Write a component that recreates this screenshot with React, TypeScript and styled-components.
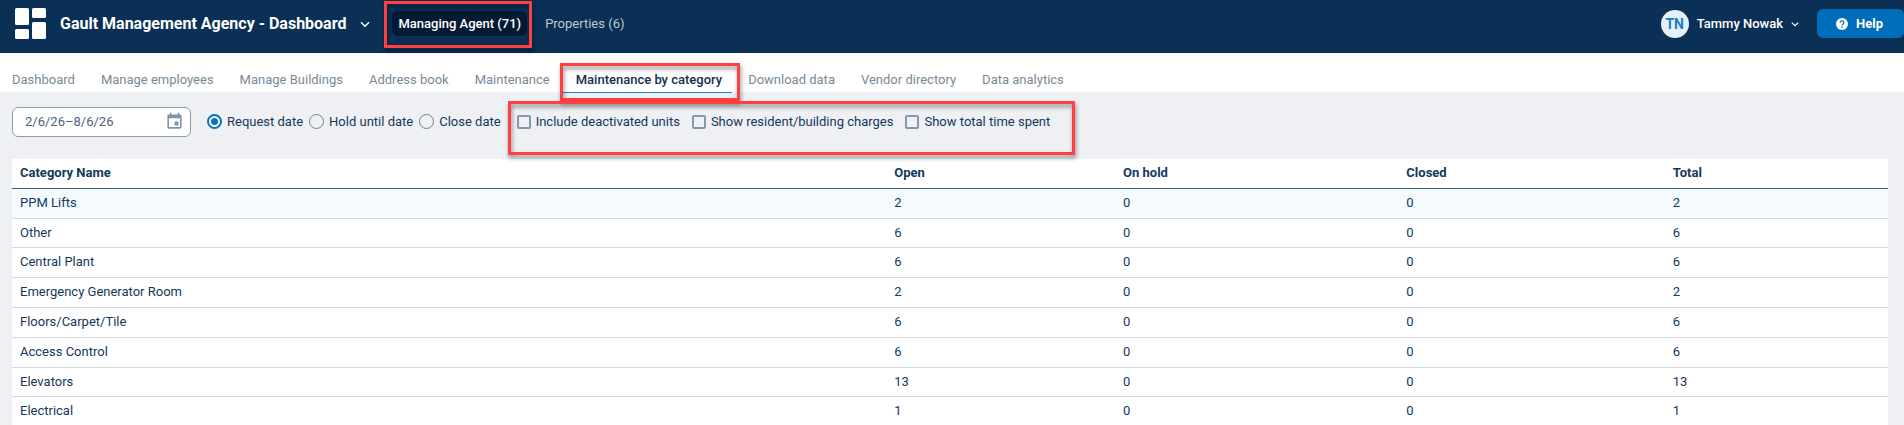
import React from "react";
import styled, { createGlobalStyle, css } from "styled-components";

const GlobalStyle = createGlobalStyle`
  * { box-sizing: border-box; }
  body {
    margin: 0;
    background: #eff0f4;
    color: #15385c;
    font: 400 13px/16px Roboto, "Liberation Sans", sans-serif;
  }
  button, input { font: inherit; color: inherit; }
`;

const TopBar = styled.header`
  display: flex;
  align-items: center;
  height: 53px;
  padding: 0 0 6px 15px;
  background: #0a3055;
  color: #fff;
`;

const BareButton = styled.button`
  display: flex;
  align-items: center;
  padding: 0;
  border: 0;
  background: none;
  cursor: pointer;
`;

const AgencyButton = styled(BareButton)`
  gap: 14px;
  font-size: 16px;
  line-height: 20px;
  font-weight: 700;
`;

const Scopes = styled.nav`
  display: flex;
  align-items: center;
  gap: 12px;
  margin-left: 22px;
`;

const ScopeButton = styled.button<{ $active?: boolean }>`
  position: relative;
  height: 25px;
  padding: 0 6px;
  border: 0;
  border-radius: 6px;
  background: ${(p) => (p.$active ? "#021a33" : "none")};
  color: ${(p) => (p.$active ? "#fff" : "#bcc8d4")};
  font-weight: ${(p) => (p.$active ? 500 : 400)};
`;

const Callout = styled.span<{ $inset: string }>`
  position: absolute;
  inset: ${(p) => p.$inset};
  border: 3px solid #ff4040;
  filter: drop-shadow(1px 3px 2px rgba(0, 0, 0, 0.45));
  pointer-events: none;
  z-index: 1;
`;

const Account = styled.div`
  display: flex;
  align-items: center;
  gap: 18px;
  margin-left: auto;
`;

const UserButton = styled(BareButton)`
  gap: 8px;
  font-weight: 500;
`;

const Avatar = styled.span`
  width: 28px;
  height: 28px;
  border-radius: 50%;
  background: #e6f0fb;
  color: #1b7ac4;
  font-size: 14px;
  line-height: 28px;
  font-weight: 700;
`;

const HelpButton = styled(BareButton)`
  gap: 8px;
  height: 29px;
  padding: 0 21px 0 19px;
  border-radius: 6px;
  background: #006dba;
  font-weight: 700;
`;

const Tabs = styled.nav`
  display: flex;
  gap: 26px;
  height: 39px;
  padding: 0 12px;
  background: #fff;
`;

const Tab = styled.a<{ $active?: boolean }>`
  position: relative;
  padding-top: 19px;
  color: #778a99;
  text-decoration: none;
  white-space: nowrap;
  ${(p) =>
    p.$active &&
    css`
      color: #12304f;
      font-weight: 500;
      &::after {
        content: "";
        position: absolute;
        inset: auto -10px -1px -13px;
        height: 1px;
        background: #0f86dc;
      }
    `}
`;

const Filters = styled.form`
  display: flex;
  align-items: center;
  height: 67px;
  padding: 0 12px 8px;
`;

const DateField = styled.label`
  display: flex;
  align-items: center;
  width: 179px;
  height: 30px;
  padding: 0 6px 0 12px;
  border: 1px solid #8c9fb2;
  border-radius: 6px;
  background: #fff;
`;

const DateInput = styled.input`
  flex: 1;
  min-width: 0;
  padding: 0;
  border: 0;
  outline: 0;
  background: none;
  color: #4a637c;
`;

const ChoiceGroup = styled.div<{ $gap: number }>`
  position: relative;
  display: flex;
  gap: ${(p) => p.$gap}px;
  margin-left: 16px;
`;

const Choice = styled.label`
  display: flex;
  align-items: center;
  gap: 5px;
  white-space: nowrap;
`;

const Radio = styled.input.attrs({ type: "radio" })`
  appearance: none;
  width: 15px;
  height: 15px;
  margin: 0;
  border: 1px solid #6b8195;
  border-radius: 50%;
  &:checked {
    border: 2px solid #0b72bd;
    background: radial-gradient(circle, #0b72bd 3px, transparent 4px);
  }
`;

const Checkbox = styled.input.attrs({ type: "checkbox" })`
  appearance: none;
  width: 14px;
  height: 14px;
  margin: 0;
  border: 2px solid #8299ae;
  border-radius: 2px;
`;

const TableArea = styled.main`
  padding: 0 16px 0 12px;
`;

const CategoryTable = styled.table`
  width: 100%;
  table-layout: fixed;
  border-collapse: separate;
  border-spacing: 0;
  background: #fff;
  text-align: left;
`;

const HeadCell = styled.th<{ $width: string }>`
  width: ${(p) => p.$width};
  height: 30px;
  padding: 0 8px 2px;
  border-bottom: 1px solid #3f5f80;
  font-weight: 700;
`;

const Row = styled.tr<{ $highlighted?: boolean }>`
  height: 30px;
  background: ${(p) => (p.$highlighted ? "#f5faff" : "#fff")};
  &:nth-child(5n + 2) {
    height: 29px;
  }
`;

const Cell = styled.td`
  padding: 0 8px 1px;
  border-bottom: 1px solid #d5dae1;
`;

const Logo = () => (
  <svg width="31" height="31" viewBox="0 0 31 31" fill="#fff" aria-hidden="true">
    <rect x="0" y="0" width="14" height="17" rx="1.5" />
    <rect x="0" y="21" width="14" height="10" rx="1.5" />
    <rect x="17" y="0" width="14" height="10" rx="1.5" />
    <rect x="17" y="14" width="14" height="17" rx="1.5" />
  </svg>
);

const Chevron = ({ size }: { size: number }) => (
  <svg width={size} height={size} viewBox="0 0 10 10" fill="none" stroke="currentColor" strokeWidth="1.4" aria-hidden="true">
    <path d="M1 3.2 5 7.2 9 3.2" />
  </svg>
);

const HelpIcon = () => (
  <svg width="12" height="12" viewBox="0 0 12 12" fill="none" aria-hidden="true">
    <circle cx="6" cy="6" r="6" fill="#fff" />
    <path d="M4.2 4.7a1.8 1.8 0 1 1 2.9 1.4C6.4 6.6 6 6.8 6 7.6" stroke="#006dba" strokeWidth="1.2" />
    <path d="M5.4 8.5h1.2v1.2h-1.2z" fill="#006dba" />
  </svg>
);

const CalendarIcon = () => (
  <svg width="19" height="19" viewBox="0 0 24 24" fill="#8094a8" aria-hidden="true">
    <path d="M17 12h-5v5h5v-5zM16 1v2H8V1H6v2H5c-1.11 0-1.99.9-1.99 2L3 19a2 2 0 0 0 2 2h14c1.1 0 2-.9 2-2V5c0-1.1-.9-2-2-2h-1V1h-2zm3 18H5V8h14v11z" />
  </svg>
);

const tabs = [
  "Dashboard",
  "Manage employees",
  "Manage Buildings",
  "Address book",
  "Maintenance",
  "Maintenance by category",
  "Download data",
  "Vendor directory",
  "Data analytics",
];
const activeTab = "Maintenance by category";

const dateModes = ["Request date", "Hold until date", "Close date"];
const options = ["Include deactivated units", "Show resident/building charges", "Show total time spent"];

const columns = [
  { label: "Category Name", width: "46.6%" },
  { label: "Open", width: "12.2%" },
  { label: "On hold", width: "15.1%" },
  { label: "Closed", width: "14.2%" },
  { label: "Total", width: "11.9%" },
];

const categories: [string, number, number, number, number][] = [
  ["PPM Lifts", 2, 0, 0, 2],
  ["Other", 6, 0, 0, 6],
  ["Central Plant", 6, 0, 0, 6],
  ["Emergency Generator Room", 2, 0, 0, 2],
  ["Floors/Carpet/Tile", 6, 0, 0, 6],
  ["Access Control", 6, 0, 0, 6],
  ["Elevators", 13, 0, 0, 13],
  ["Electrical", 1, 0, 0, 1],
];

export default function App() {
  return (
    <>
      <GlobalStyle />
      <TopBar>
        <AgencyButton type="button">
          <Logo />
          <span>Gault Management Agency - Dashboard</span>
          <Chevron size={10} />
        </AgencyButton>
        <Scopes>
          <ScopeButton type="button" $active>
            Managing Agent (71)
            <Callout $inset="-10px -5px -12px -8px" />
          </ScopeButton>
          <ScopeButton type="button">Properties (6)</ScopeButton>
        </Scopes>
        <Account>
          <UserButton type="button">
            <Avatar>TN</Avatar>
            <span>Tammy Nowak</span>
            <Chevron size={8} />
          </UserButton>
          <HelpButton type="button">
            <HelpIcon />
            Help
          </HelpButton>
        </Account>
      </TopBar>
      <Tabs>
        {tabs.map((name) => (
          <Tab key={name} href="#" $active={name === activeTab}>
            {name}
            {name === activeTab && <Callout $inset="10px -18px -9px -16px" />}
          </Tab>
        ))}
      </Tabs>
      <Filters>
        <DateField>
          <DateInput aria-label="Date range" defaultValue="2/6/26–8/6/26" />
          <CalendarIcon />
        </DateField>
        <ChoiceGroup $gap={6}>
          {dateModes.map((name, i) => (
            <Choice key={name}>
              <Radio name="dateMode" defaultChecked={i === 0} />
              {name}
            </Choice>
          ))}
        </ChoiceGroup>
        <ChoiceGroup $gap={12}>
          {options.map((name) => (
            <Choice key={name}>
              <Checkbox />
              {name}
            </Choice>
          ))}
          <Callout $inset="-13px -25px -25px -9px" />
        </ChoiceGroup>
      </Filters>
      <TableArea>
        <CategoryTable>
          <thead>
            <tr>
              {columns.map((c) => (
                <HeadCell key={c.label} $width={c.width} scope="col">
                  {c.label}
                </HeadCell>
              ))}
            </tr>
          </thead>
          <tbody>
            {categories.map(([name, ...counts], i) => (
              <Row key={name} $highlighted={i === 0}>
                <Cell>{name}</Cell>
                {counts.map((n, c) => (
                  <Cell key={columns[c + 1].label}>{n}</Cell>
                ))}
              </Row>
            ))}
          </tbody>
        </CategoryTable>
      </TableArea>
    </>
  );
}
